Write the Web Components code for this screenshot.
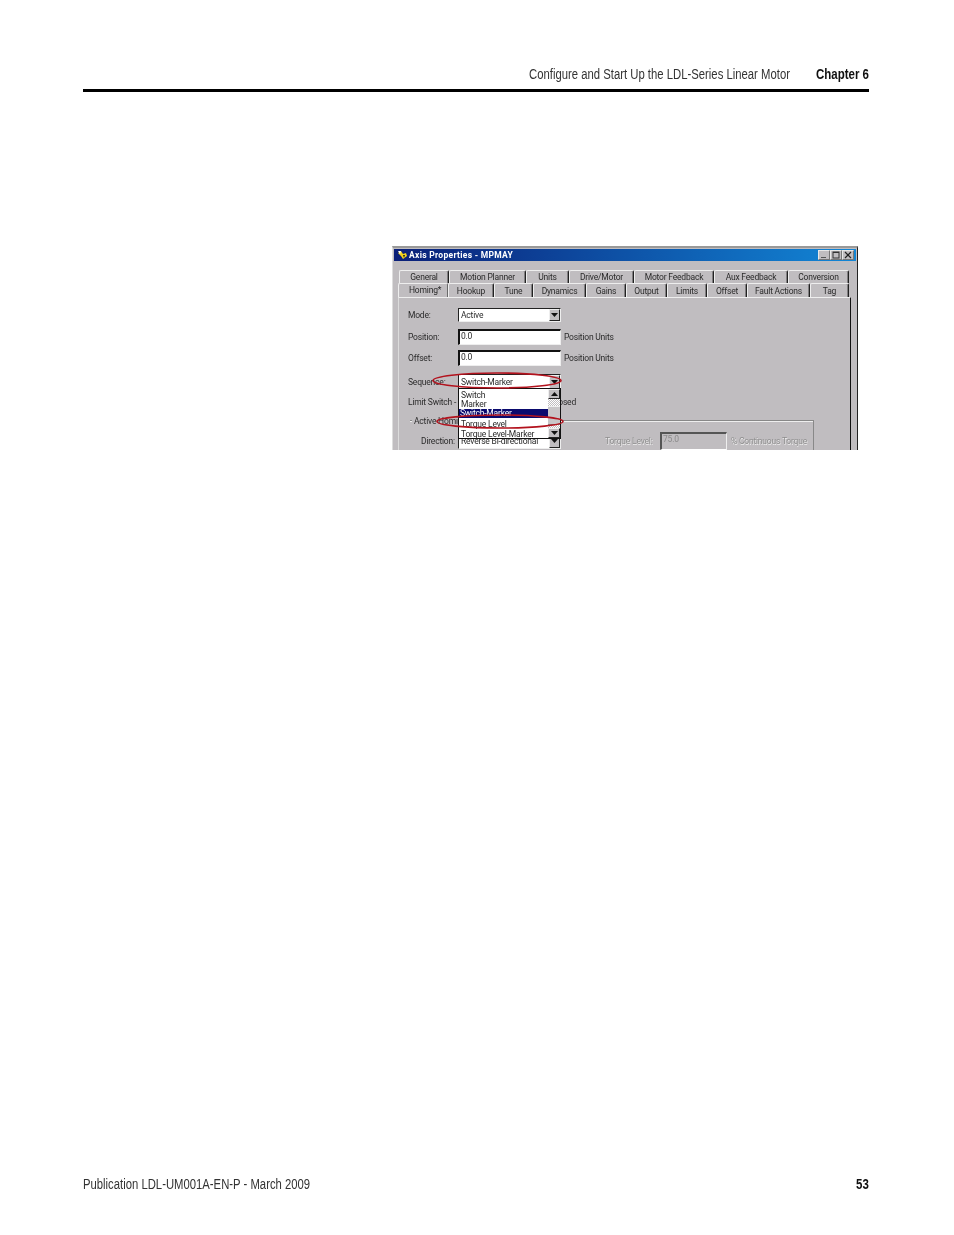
<!DOCTYPE html>
<html>
<head>
<meta charset="utf-8">
<title>Configure and Start Up the LDL-Series Linear Motor</title>
<style>
  html, body { margin: 0; background: #fff; }
  body { width: 954px; height: 1235px; overflow: hidden; font-family: "Liberation Sans", sans-serif; }
  .page { display: flex; flex-direction: column; height: 1235px; padding: 0 85px 0 83px; box-sizing: border-box; }
  axis-dialog { margin: 154px 0 0 309px; }
  page-footer { margin-top: auto; margin-bottom: 43px; }
</style>
</head>
<body>
<div class="page">
  <page-header>
    <span slot="title">Configure and Start Up the LDL-Series Linear Motor</span>
    <span slot="chapter">Chapter 6</span>
  </page-header>
  <axis-dialog title-text="Axis Properties - MPMAY"></axis-dialog>
  <page-footer>
    <span slot="pub">Publication LDL-UM001A-EN-P - March 2009</span>
    <span slot="num">53</span>
  </page-footer>
</div>

<script>
class PageHeader extends HTMLElement
{
  constructor()
  {
    super();
    this.attachShadow({mode: "open"});
    this.shadowRoot.innerHTML = `
      <style>
        :host { display: block; padding-top: 66px; }
        .row { display: flex; justify-content: flex-end; gap: 26px; height: 16px; line-height: 16px; font-size: 14px; color: #333; }
        span { display: block; white-space: nowrap; transform-origin: left center; }
        .title { width: 261px; transform: scaleX(0.808); }
        .chapter { width: 53px; font-weight: bold; color: #111; transform: scaleX(0.82); }
        .rule { height: 3px; margin-top: 7px; background: #000; }
      </style>
      <div class="row"><span class="title"><slot name="title"></slot></span><span class="chapter"><slot name="chapter"></slot></span></div>
      <div class="rule"></div>
    `;
  }
}

class PageFooter extends HTMLElement
{
  constructor()
  {
    super();
    this.attachShadow({mode: "open"});
    this.shadowRoot.innerHTML = `
      <style>
        :host { display: flex; justify-content: space-between; height: 16px; line-height: 16px; font-size: 14px; color: #333; }
        span { display: block; white-space: nowrap; transform-origin: left center; }
        .pub { width: 227px; transform: scaleX(0.807); }
        .num { width: 13px; font-weight: bold; color: #111; transform: scaleX(0.82); }
      </style>
      <span class="pub"><slot name="pub"></slot></span><span class="num"><slot name="num"></slot></span>
    `;
  }
}

class DlgTab extends HTMLElement
{
  constructor()
  {
    super();
    this.attachShadow({mode: "open"});
    this.shadowRoot.innerHTML = `
      <style>
        :host { display: block; flex: none; box-sizing: border-box; height: 100%; text-align: center; border-top: 1px solid #eee; border-left: 1px solid #eee; border-right: 1px solid #222; box-shadow: inset -1px 0 0 #807e80; border-radius: 2px 2px 0 0; white-space: nowrap; overflow: hidden; }
        :host([active]) { text-align: left; padding-left: 10px; border-right-color: #6a6a6a; box-shadow: none; }
      </style>
      <slot></slot>
    `;
  }
}

class DlgCombo extends HTMLElement
{
  constructor()
  {
    super();
    this.attachShadow({mode: "open"});
    this.shadowRoot.innerHTML = `
      <style>
        :host { display: flex; flex: none; box-sizing: border-box; width: 103px; height: 16px; background: #fff; border: 1px solid #222; border-right-color: #eee; border-bottom-color: #eee; align-items: center; padding-left: 2px; }
        .text { flex: 1; white-space: nowrap; overflow: hidden; line-height: 12px; margin-top: -1px; }
        .arrow { width: 11px; height: 100%; background: #c0bdc0; border: 1px solid; border-color: #eee #222 #222 #eee; box-sizing: border-box; display: flex; align-items: center; justify-content: center; }
        .arrow svg { display: block; }
      </style>
      <span class="text"><slot></slot></span>
      <span class="arrow"><svg width="7" height="4" viewBox="0 0 7 4"><path d="M0 0H7L3.5 4Z" fill="#111"/></svg></span>
    `;
  }
}

class DlgInput extends HTMLElement
{
  constructor()
  {
    super();
    this.attachShadow({mode: "open"});
    this.shadowRoot.innerHTML = `
      <style>
        :host { display: block; flex: none; box-sizing: border-box; width: 103px; height: 16px; background: #fff; border: 1px solid #111; border-width: 2px 1px 1px 2px; border-right-color: #eee; border-bottom-color: #eee; padding-left: 1px; line-height: 11px; white-space: nowrap; }
        :host([disabled]) { width: 67px; height: 18px; background: #c0bdc0; color: #8a8a8a; border-color: #555 #eee #fff #555; }
      </style>
      <slot></slot>
    `;
  }
}

class DlgDropdown extends HTMLElement
{
  constructor()
  {
    super();
    this.attachShadow({mode: "open"});
    this.shadowRoot.innerHTML = `
      <style>
        :host { position: absolute; left: 59px; top: 90px; width: 103px; height: 51px; box-sizing: border-box; background: #fff; border: 1px solid #111; display: flex; }
        .list { flex: 1; line-height: 10px; padding-top: 1px; }
        .item { height: 10px; padding-left: 2px; white-space: nowrap; }
        .short { height: 9px; line-height: 9px; }
        .sel { background: #0a0a6e; color: #fff; height: 9px; line-height: 9px; margin-bottom: 1px; padding-left: 1px; }
        .bar { width: 12px; display: flex; flex-direction: column; background: repeating-conic-gradient(#fff 0 25%, #c0bdc0 0 50%) 0 0 / 2px 2px; }
        .btn { flex: none; height: 10px; background: #c0bdc0; border: 1px solid; border-color: #eee #222 #222 #eee; box-sizing: border-box; display: flex; align-items: center; justify-content: center; }
        .thumb { flex: 1; background: #c8c6c8; margin: 7px 0 3px; border-top: 1px solid #eee; border-bottom: 1px solid #888; }
      </style>
      <div class="list">
        <div class="item">Switch</div>
        <div class="item short">Marker</div>
        <div class="item sel">Switch-Marker</div>
        <div class="item">Torque Level</div>
        <div class="item">Torque Level-Marker</div>
      </div>
      <div class="bar">
        <div class="btn"><svg width="7" height="4" viewBox="0 0 7 4"><path d="M0 4H7L3.5 0Z" fill="#111"/></svg></div>
        <div class="thumb"></div>
        <div class="btn"><svg width="7" height="4" viewBox="0 0 7 4"><path d="M0 0H7L3.5 4Z" fill="#111"/></svg></div>
      </div>
    `;
  }
}

const TABS_BACK = [["General", 50], ["Motion Planner", 77], ["Units", 43], ["Drive/Motor", 65], ["Motor Feedback", 80], ["Aux Feedback", 74], ["Conversion", 61]];
const TABS_FRONT = [["Hookup", 46], ["Tune", 39], ["Dynamics", 53], ["Gains", 40], ["Output", 41], ["Limits", 40], ["Offset", 40], ["Fault Actions", 63], ["Tag", 39]];

class AxisDialog extends HTMLElement
{
  get titleText()
  {
    return this.getAttribute("title-text") ?? "";
  }

  constructor()
  {
    super();
    this.attachShadow({mode: "open"});
    this.render();
  }

  render()
  {
    const tab = ([name, w]) => `<dlg-tab style="width:${w}px">${name}</dlg-tab>`;

    this.shadowRoot.innerHTML = `
      <style>${this.styleCSS()}</style>
      <div class="window">
        <div class="title">
          <svg width="11" height="10" viewBox="0 0 11 10"><path d="M1 3L4 1L6 4L9 3L10 6L6 9L4 6Z" fill="#f2d21b"/><path d="M1 1L4 1L3 4Z" fill="#fff"/><path d="M6 5L8 5L7 8Z" fill="#222"/></svg>
          <span class="title-text">${this.titleText}</span>
          <span class="caps">
            <span class="cap"><svg width="10" height="8" viewBox="0 0 10 8"><path d="M2 6H7V7H2Z" fill="#555"/></svg></span>
            <span class="cap"><svg width="10" height="8" viewBox="0 0 10 8"><path d="M1.5 .5H8.5V7.5H1.5Z M2.5 2V6.5H7.5V2Z" fill="#333" fill-rule="evenodd"/></svg></span>
            <span class="cap"><svg width="10" height="8" viewBox="0 0 10 8"><path d="M2 1L8 7M8 1L2 7" stroke="#222" stroke-width="1.2"/></svg></span>
          </span>
        </div>
        <div class="tabs back">${TABS_BACK.map(tab).join("")}</div>
        <div class="tabs front"><dlg-tab active style="width:50px">Homing*</dlg-tab>${TABS_FRONT.map(tab).join("")}</div>
        <div class="panel">
          <div class="row r-mode"><label>Mode:</label><dlg-combo>Active</dlg-combo></div>
          <div class="row r-pos"><label>Position:</label><dlg-input>0.0</dlg-input><span class="unit">Position Units</span></div>
          <div class="row r-off"><label>Offset:</label><dlg-input>0.0</dlg-input><span class="unit">Position Units</span></div>
          <div class="row r-seq"><label>Sequence:</label><dlg-combo>Switch-Marker</dlg-combo></div>
          <div class="row r-lim"><label>Limit Switch -</label><span class="closed">Normally Closed</span></div>
          <div class="group">
            <span class="legend">Active Homing</span>
            <div class="row r-dir">
              <label>Direction:</label><dlg-combo>Reverse Bi-directional</dlg-combo>
              <span class="dim t-label">Torque Level:</span><dlg-input disabled>75.0</dlg-input><span class="dim t-unit">% Continuous Torque</span>
            </div>
          </div>
          <dlg-dropdown></dlg-dropdown>
        </div>
      </div>
      <svg class="marks" width="466" height="204" viewBox="0 0 466 204">
        <ellipse cx="105" cy="134.5" rx="64" ry="7.5" fill="none" stroke="#b3121d" stroke-width="1.6"/>
        <ellipse cx="108" cy="175.5" rx="63" ry="6.5" fill="none" stroke="#b3121d" stroke-width="1.6"/>
      </svg>
    `;
  }

  styleCSS()
  {
    return `
      :host { display: block; position: relative; flex: none; width: 466px; height: 204px; overflow: hidden; }
      .window { box-sizing: border-box; height: 100%; overflow: hidden; background: #c0bdc0; border-top: 2px solid #999; border-left: 1px solid #ddd; border-right: 1px solid #222; padding: 1px 1px 0 0;
        font-family: Roboto, "Liberation Sans", sans-serif; font-size: 8.5px; letter-spacing: -0.2px; color: #2b2b2b; filter: blur(0.3px); }
      .marks { position: absolute; left: 0; top: 0; }
      .title { display: flex; align-items: center; height: 12px; margin-left: 1px; padding-left: 3px; gap: 1px; background: linear-gradient(90deg, #0a1f78, #1286d6); color: #fff; font-weight: bold; letter-spacing: 0.3px; }
      .title-text { flex: 1; }
      .caps { display: flex; padding-right: 2px; }
      .cap { display: block; width: 12px; height: 10px; box-sizing: border-box; background: #c0bdc0; border: 1px solid; border-color: #e8e8e8 #777 #777 #e8e8e8; }
      .cap svg { display: block; }
      .tabs { display: flex; height: 14px; line-height: 14px; }
      .back { margin: 9px 0 0 6px; height: 13px; line-height: 13px; }
      .front { margin-left: 5px; }
      .front dlg-tab[active] { line-height: 12px; }
      .panel { position: relative; margin-left: 5px; width: 453px; height: 170px; box-sizing: border-box; border-top: 1px solid #eee; border-left: 1px solid #dcdcdc; border-right: 1px solid #111; padding-top: 10px; }
      .row { display: flex; align-items: center; white-space: nowrap; }
      label { display: block; flex: none; box-sizing: border-box; width: 59px; padding-left: 9px; }
      .unit { margin-left: 3px; }
      .r-mode { height: 14px; }
      .r-mode dlg-combo { height: 14px; }
      .r-pos { margin-top: 7px; }
      .r-off { margin-top: 5px; }
      .r-seq { margin-top: 8px; }
      .r-lim { margin-top: 5px; height: 14px; }
      .closed { display: block; width: 118px; text-align: right; }
      .group { position: relative; margin: 11px 0 0 11px; width: 404px; height: 40px; box-sizing: border-box; border-top: 1px solid #888; border-right: 1px solid #888; box-shadow: inset 0 1px 0 #eee; padding-top: 11px; }
      .legend { position: absolute; left: 2px; top: -5px; padding: 0 2px; background: #c0bdc0; }
      .r-dir label { padding-left: 11px; width: 48px; }
      .dim { display: block; flex: none; color: #8f8f8f; text-shadow: 0.5px 0.5px 0 #eee; }
      .t-label { margin-left: 44px; width: 55px; }
      .t-unit { margin-left: 4px; }
    `;
  }
}

customElements.define("page-header", PageHeader);
customElements.define("page-footer", PageFooter);
customElements.define("dlg-tab", DlgTab);
customElements.define("dlg-combo", DlgCombo);
customElements.define("dlg-input", DlgInput);
customElements.define("dlg-dropdown", DlgDropdown);
customElements.define("axis-dialog", AxisDialog);
</script>
</body>
</html>
